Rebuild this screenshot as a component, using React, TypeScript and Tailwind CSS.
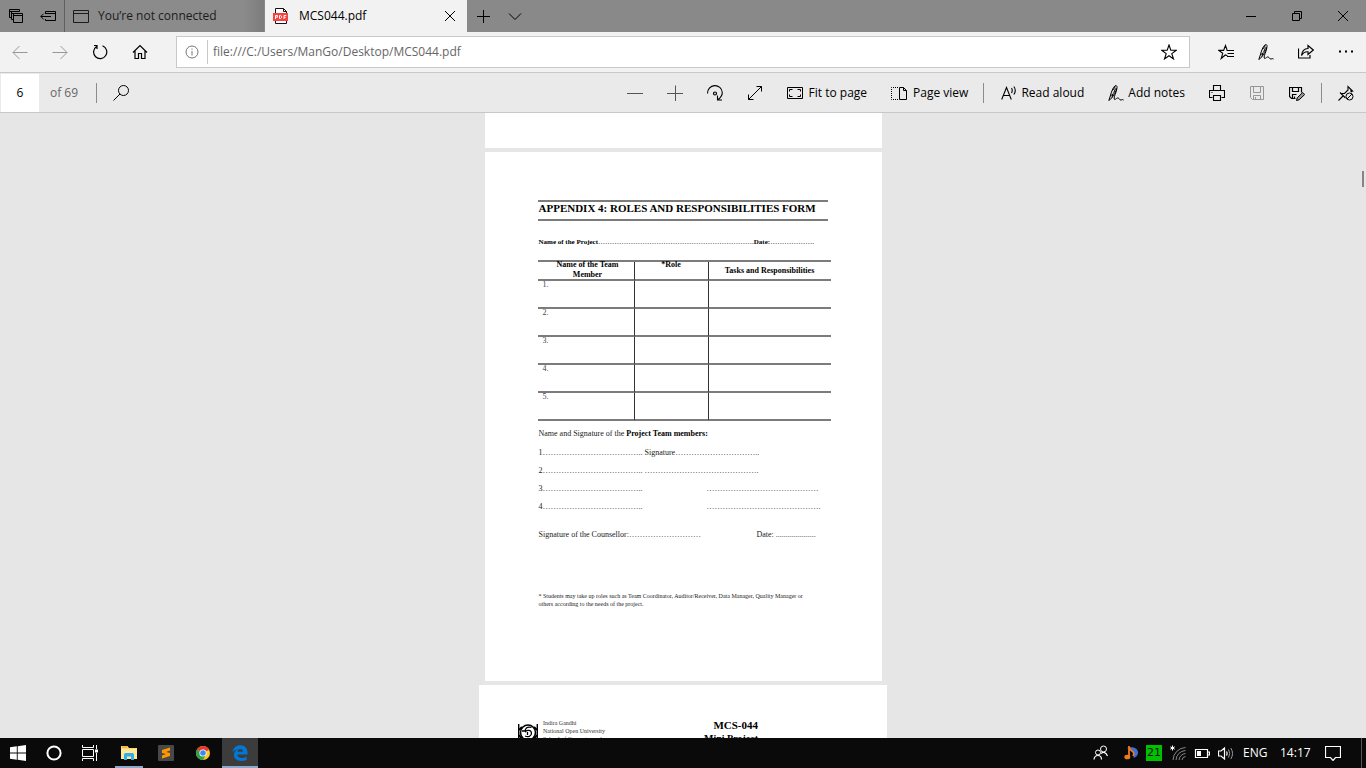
import React from 'react';
import type { ReactNode } from 'react';

const dots = (n: number, tail = 0) => '…'.repeat(n) + '.'.repeat(tail);

function Icon({ children, size = 16, className = '' }: { children: ReactNode; size?: number; className?: string }) {
  return (
    <svg
      width={size}
      height={size}
      viewBox={`0 0 ${size} ${size}`}
      fill="none"
      stroke="currentColor"
      strokeWidth="1"
      className={'shrink-0 ' + className}
      aria-hidden="true"
    >
      {children}
    </svg>
  );
}

function IconButton({ label, children, className = 'w-10' }: { label: string; children: ReactNode; className?: string }) {
  return (
    <button type="button" aria-label={label} className={'flex h-full shrink-0 items-center justify-center ' + className}>
      {children}
    </button>
  );
}

const PenIcon = () => (
  <Icon>
    <path d="M.8 15.500L2.300 11C3.300 7 4.800 3 6.800 1C7.800 0 9.300.6 9 2.400C8.500 6 5.500 11 2.600 14.200L.8 15.500M2.300 11L4.800 9L4 12.500M4.500 5.500L7.500 1.500M5.500 8.500L7.500 3.500" />
    <path d="M8.900 3.500C8.600 7 5.600 11.500 6.200 14C6.900 15.700 8.500 12.700 10 12.900C11.400 13.200 11.400 15.300 13 15C14.200 14.800 14.800 14.200 15.600 15" />
  </Icon>
);

const StarPath = 'M8 1l1.800 5.300h5.400l-4.400 3.300l1.700 5.300L8 11.700l-4.500 3.200l1.700-5.300L.8 6.300h5.400z';

function TabBar() {
  return (
    <div className="flex h-8 shrink-0 items-stretch bg-[#898989] text-black">
      <IconButton label="Tabs you've set aside" className="w-8">
        <Icon>
          <path d="M3.500 9.500h-2v-8h10v2M1.500 3.500h10M3.500 3.500v8M3.500 11.500h2M3.500 5.500h10M5.500 5.500h9v9h-9zM5.500 7.500h9" />
        </Icon>
      </IconButton>
      <IconButton label="Set these tabs aside" className="w-8">
        <Icon>
          <path d="M5.500 6V3.500h10v9h-10V11M5.500 5.500h10M11 8.500H.8M3.500 5.800L.8 8.500l2.700 2.700" />
        </Icon>
      </IconButton>
      <div className="flex w-[200px] items-center gap-[9px] border-l border-[#5f5f5f] bg-linear-to-r from-[#8b8b8b] from-90% to-[#7c7c7c] pl-2 text-[#1c1c1c]">
        <Icon>
          <path d="M.5 2.500h15v12H.5zM.5 5.500h15" />
        </Icon>
        <span>You’re not connected</span>
      </div>
      <div className="ml-px flex w-[202px] items-center bg-[#f2f2f2] pl-2">
        <svg width="16" height="16" viewBox="0 0 16 16" className="shrink-0" aria-hidden="true">
          <path d="M2.500 15.500V.5h8l3 3v12z" fill="#fff" stroke="#111" />
          <path d="M10.500.5v3h3" fill="none" stroke="#111" />
          <rect x="0" y="5" width="15" height="8" fill="#f9423f" />
          <path d="M2.500 11V7.500h2v1.700h-2M6.500 7.500v3h1.200l.8-.8v-1.400l-.8-.8zM11 11V7.500h2.200M11 9.300h1.800" fill="none" stroke="#fff" />
        </svg>
        <span className="ml-[10px] flex-1">MCS044.pdf</span>
        <IconButton label="Close tab" className="w-[34px]">
          <Icon>
            <path d="M3 3l10 10M13 3L3 13" />
          </Icon>
        </IconButton>
      </div>
      <IconButton label="New tab" className="w-8">
        <Icon>
          <path d="M8.500 2v13M2 8.500h13" />
        </Icon>
      </IconButton>
      <IconButton label="Show tab previews" className="w-8">
        <Icon>
          <path d="M2 5.500l6 6l6-6" />
        </Icon>
      </IconButton>
      <div className="flex-1" />
      <IconButton label="Minimize" className="w-[46px]">
        <Icon>
          <path d="M3 8.500h10" />
        </Icon>
      </IconButton>
      <IconButton label="Restore" className="w-[46px]">
        <Icon>
          <path d="M3.500 5.500h7v7h-7zM5.500 5.500v-2h7v7h-2" />
        </Icon>
      </IconButton>
      <IconButton label="Close" className="w-[46px]">
        <Icon>
          <path d="M3 3l10 10M13 3L3 13" />
        </Icon>
      </IconButton>
    </div>
  );
}

function NavBar() {
  return (
    <div className="flex h-10 shrink-0 items-center bg-[#f2f2f2] text-black">
      <IconButton label="Back">
        <Icon className="text-[#999]">
          <path d="M15.500 8.500H1M7.500 2L1 8.500L7.500 15" />
        </Icon>
      </IconButton>
      <IconButton label="Forward">
        <Icon className="text-[#999]">
          <path d="M.5 8.500H15M8.500 2L15 8.500L8.500 15" />
        </Icon>
      </IconButton>
      <IconButton label="Refresh">
        <Icon>
          <path d="M10.500 1.800A6.600 6.600 0 1 1 4.500 2.500M2 1.500h3v3.500" strokeWidth="1.200" />
        </Icon>
      </IconButton>
      <IconButton label="Home">
        <Icon>
          <path d="M1 8.500L8 1.600l7 6.900M3 7v7.500h3.500v-5h3v5H13V7" strokeWidth="1.200" />
        </Icon>
      </IconButton>
      <div className="mx-4 flex h-8 flex-1 items-center border border-[#c9c9c9] bg-white">
        <Icon className="ml-[7px] text-[#777]">
          <circle cx="8" cy="8" r="6" />
          <path d="M8 7v4.500M8 4.500v1.200" />
        </Icon>
        <span className="ml-[7px] h-6 w-px bg-[#c9c9c9]" />
        <input
          aria-label="Address"
          defaultValue="file:///C:/Users/ManGo/Desktop/MCS044.pdf"
          className="ml-[5px] min-w-0 flex-1 bg-transparent text-[#666] outline-none"
        />
        <IconButton label="Add to favorites">
          <Icon>
            <path d={StarPath} strokeWidth="1.100" />
          </Icon>
        </IconButton>
      </div>
      <IconButton label="Favorites">
        <Icon>
          <path d="M9.500 11.800L7.300 11L3.200 14.500l1.500-5.200L.9 6.400h4.700L7.500 1.500l1.700 4.900M8.500 6.500H16M9.500 9.500H16M9 12.500h7" strokeWidth="1.100" />
        </Icon>
      </IconButton>
      <IconButton label="Add notes to page">
        <PenIcon />
      </IconButton>
      <IconButton label="Share">
        <Icon>
          <path d="M.5 4.500v9.500h11.500v-3M3.500 11.500C4 7 6.500 4.600 10 4.500V1.500L15.300 6L10 10.500V7.800C7 7.500 5 9 3.500 11.500z" strokeWidth="1.200" />
        </Icon>
      </IconButton>
      <IconButton label="Settings and more">
        <Icon>
          <path d="M1 7.500h2M7 7.500h2M13 7.500h2" strokeWidth="2" />
        </Icon>
      </IconButton>
    </div>
  );
}

function Divider({ className }: { className: string }) {
  return <span className={'h-5 w-px shrink-0 bg-[#8c8c8c] ' + className} />;
}

function PdfToolbar() {
  return (
    <div className="flex h-[41px] shrink-0 items-center border-y border-[#c8c8c8] bg-[#eaeaea] text-black">
      <input aria-label="Page number" defaultValue="6" className="ml-px h-[38px] w-[38px] bg-white text-center outline-none" />
      <span className="ml-[11px] text-[#666]">of 69</span>
      <Divider className="ml-[18px]" />
      <IconButton label="Find" className="ml-1 w-10">
        <Icon>
          <circle cx="10.500" cy="5.500" r="5" />
          <path d="M7 9L.5 15.500" />
        </Icon>
      </IconButton>
      <div className="flex-1" />
      <IconButton label="Zoom out">
        <Icon>
          <path d="M0 8.500h16" stroke="#555" />
        </Icon>
      </IconButton>
      <IconButton label="Zoom in">
        <Icon>
          <path d="M0 8.500h16M8.500 .5v16" stroke="#555" />
        </Icon>
      </IconButton>
      <IconButton label="Rotate">
        <Icon>
          <path d="M.6 8.500A7.200 7.200 0 0 1 15.300 7.500Q15.300 11.500 10.800 14.800M10.500 10.500v4.500h4.500" strokeWidth="1.100" />
          <circle cx="8" cy="8.500" r="1.500" strokeWidth="1.200" />
        </Icon>
      </IconButton>
      <IconButton label="Full screen">
        <Icon>
          <path d="M1.500 14.500l13-13M9.500 1.500h5v5M1.500 9.500v5h5" />
        </Icon>
      </IconButton>
      <button type="button" className="flex h-full items-center gap-1.5 px-3">
        <Icon>
          <path d="M.5 2.500h15v11H.5zM2.500 6.500v-2h3M10.500 4.500h3v2M13.500 9.500v2h-3M5.500 11.500h-3v-2" />
        </Icon>
        Fit to page
      </button>
      <button type="button" className="flex h-full items-center gap-1.5 px-3">
        <Icon>
          <path d="M8.500 2.500h4l3 3v9h-7zM12.500 2.500v3h3" />
          <path d="M7 2.500H.5v12H7" strokeDasharray="1 1" />
        </Icon>
        Page view
      </button>
      <Divider className="mr-[5px] ml-[3px]" />
      <button type="button" className="flex h-full items-center gap-1 px-3">
        <Icon>
          <path d="M.7 14.500L5.500 2.500l4.800 12M2.500 10.500h6M10.500 3q1.500 2.500 0 5M12.800 1.500q3 4 0 8" strokeWidth="1.100" />
        </Icon>
        Read aloud
      </button>
      <button type="button" className="flex h-full items-center gap-1 px-3">
        <PenIcon />
        Add notes
      </button>
      <IconButton label="Print">
        <Icon>
          <path d="M3.500 12.500h-3v-7h15v7h-3M4.500 5.500v-5h7v5M4.500 10.500h7v5h-7zM2.500 7.500h1" strokeWidth="1.100" />
        </Icon>
      </IconButton>
      <IconButton label="Save">
        <Icon className="text-[#969696]">
          <path d="M1.500 1.500h13v13h-11l-2-2zM4.500 1.500v6h7v-6M4.500 14.500v-4h7v4M6.500 12v2" />
        </Icon>
      </IconButton>
      <IconButton label="Save as">
        <Icon>
          <path d="M6.500 13.500h-4l-2-2v-9h12v5M3.500 2.500v4h6v-4M3.500 13.500v-4h4M5.500 11.500v2" strokeWidth="1.200" />
          <path d="M7.500 15.500l.7-2.700l5.500-5.300l2 2l-5.500 5.300z" fill="#999" />
        </Icon>
      </IconButton>
      <Divider className="mx-1" />
      <IconButton label="Unpin toolbar">
        <Icon>
          <path d="M.5 15.500L5 11M2 7.500L7.500 13M3 8.500h3.500L10 5V1.500L14.500 6H12M14.500 6L13 7" strokeWidth="1.100" />
          <circle cx="11.500" cy="11.500" r="3.500" />
          <path d="M9 14l5-5" />
        </Icon>
      </IconButton>
    </div>
  );
}

function RolesTable() {
  return (
    <table className="-ml-px w-[293px] table-fixed border-separate border-spacing-0 border-t-2 border-[#7c7c7c] leading-[10px]">
      <colgroup>
        <col className="w-[97px]" />
        <col className="w-[74px]" />
        <col />
      </colgroup>
      <thead>
        <tr>
          <th className="h-[19px] border-r border-b-2 border-r-[#333] border-b-[#7c7c7c] p-0 align-top">
            <div className="-mt-0.5 -mb-px pr-3 pl-4">Name of the Team Member</div>
          </th>
          <th className="border-r border-b-2 border-r-[#333] border-b-[#7c7c7c] p-0 align-top">
            <div className="-mt-0.5">*Role</div>
          </th>
          <th className="border-b-2 border-b-[#7c7c7c] p-0 align-middle">Tasks and Responsibilities</th>
        </tr>
      </thead>
      <tbody>
        {[1, 2, 3, 4, 5].map((n) => (
          <tr key={n}>
            <td className="h-7 border-r border-b-2 border-r-[#333] border-b-[#7c7c7c] p-0 pl-[5px] align-top leading-2 text-[#444]">{n}.</td>
            <td className="border-r border-b-2 border-r-[#333] border-b-[#7c7c7c] p-0" />
            <td className="border-b-2 border-b-[#7c7c7c] p-0" />
          </tr>
        ))}
      </tbody>
    </table>
  );
}

function FormPage() {
  return (
    <article className="h-[529px] w-[397px] shrink-0 bg-white pt-12 pl-[54px] text-[8px] whitespace-nowrap">
      <h1 className="-ml-px flex h-[21px] w-[290px] items-center border-y-2 border-[#7c7c7c] pb-1 pl-px text-[11px] leading-[13px] font-bold">
        APPENDIX 4: ROLES AND RESPONSIBILITIES FORM
      </h1>
      <p className="mt-4 mb-[13px] text-[7px] leading-[10px] font-bold">
        Name of the Project<span className="font-normal">{dots(22, 1)}</span>Date:<span className="font-normal">{dots(6, 1)}</span>
      </p>
      <div className="whitespace-normal">
        <RolesTable />
      </div>
      <div className="mt-1 leading-[18px] text-[#222]">
        <p className="mb-px">
          Name and Signature of the <b className="text-black">Project Team members:</b>
        </p>
        <p>1{dots(12, 2)} Signature{dots(10, 2)}</p>
        <p>2{dots(12, 2)} {dots(14, 1)}</p>
        <p className="flex">
          <span className="w-[168px]">3{dots(12, 2)}</span>
          <span>{dots(14)}</span>
        </p>
        <p className="flex">
          <span className="w-[168px]">4{dots(12, 2)}</span>
          <span>{dots(14, 1)}</span>
        </p>
        <p className="mt-[10px] flex">
          <span className="w-[218px]">Signature of the Counsellor:{dots(9)}</span>
          <span>Date: {dots(0, 20)}</span>
        </p>
      </div>
      <p className="mt-12 text-[6px] leading-2 text-[#222]">
        * Students may take up roles such as Team Coordinator, Auditor/Receiver, Data Manager, Quality Manager or
        <br />
        others according to the needs of the project.
      </p>
    </article>
  );
}

function CoverPage() {
  return (
    <article className="flex h-[540px] w-[408px] shrink-0 items-start bg-white pt-[34px] pl-[39px]">
      <svg width="20" height="20" viewBox="0 0 20 20" fill="none" stroke="#000" className="mt-1 shrink-0" aria-hidden="true">
        <path d="M.7 1v15M19.300 1v15" strokeWidth="1.400" />
        <path d="M1 7l3-3M1 12l3 4M19 7l-3-3M19 12l-3 4" strokeWidth="2" />
        <circle cx="10" cy="9.500" r="7.500" strokeWidth="1.600" />
        <path d="M13.500 4.500C9 3 6.500 6 7.500 8.500C9 7 13 6.500 13.500 10C13.500 13.500 10 14.500 7 13M4 8h4M9.500 9v3" strokeWidth="1.300" />
      </svg>
      <p className="ml-[5px] w-[100px] text-[6px] leading-2 text-[#333]">
        Indira Gandhi
        <br />
        National Open University
        <br />
        School of Computer and
      </p>
      <p className="ml-[42px] w-[73px] text-right text-[11px] leading-[13px] font-bold">
        MCS-044
        <br />
        <span className="text-[10px]">Mini Project</span>
      </p>
    </article>
  );
}

function TaskButton({ label, active = false, open = false, children }: { label: string; active?: boolean; open?: boolean; children: ReactNode }) {
  return (
    <button
      type="button"
      aria-label={label}
      className={'relative flex h-full w-9 items-center justify-center ' + (active ? 'bg-[#3c3c3c]' : '')}
    >
      {children}
      {(open || active) && <span className={'absolute bottom-0 h-0.5 bg-[#8aa9cf] ' + (active ? 'inset-x-0' : 'inset-x-1')} />}
    </button>
  );
}

function Taskbar() {
  return (
    <footer className="flex h-[30px] shrink-0 items-center bg-[#0a0a0a] text-white">
      <TaskButton label="Start">
        <svg width="16" height="16" viewBox="0 0 16 16" fill="#fff">
          <path d="M0 2.200L6.800 1.300V7.500H0zM7.700 1.200L16 0V7.500H7.700zM0 8.400H6.800V14.700L0 13.800zM7.700 8.400H16V16L7.700 14.800z" />
        </svg>
      </TaskButton>
      <TaskButton label="Search">
        <svg width="18" height="18" viewBox="0 0 18 18" fill="none" stroke="#fff">
          <circle cx="9" cy="9" r="6.600" strokeWidth="2" />
        </svg>
      </TaskButton>
      <TaskButton label="Task View">
        <Icon>
          <path d="M.5 4.500h11v7H.5zM.5 0v2.500h11V0M.5 16v-2.500h11V16M14.500 0v4M14.500 8v8" />
          <path d="M14.500 4.500v3" strokeWidth="3" />
        </Icon>
      </TaskButton>
      <div className="ml-[3px] flex h-full gap-px">
        <TaskButton label="File Explorer" open>
          <svg width="16" height="16" viewBox="0 0 16 16">
            <path d="M0 1h6.500l1.500 2H16v11H0z" fill="#ffd76b" />
            <path d="M0 4h16v10H0z" fill="#ffe89b" />
            <path d="M1 1.500h5v1H1z" fill="#e79a24" />
            <path d="M3 15V9.500Q3 8 4.500 8h7Q13 8 13 9.500V15h-3v-3.500H6V15z" fill="#35aee8" />
          </svg>
        </TaskButton>
        <TaskButton label="Sublime Text">
          <svg width="16" height="16" viewBox="0 0 16 16">
            <rect width="16" height="16" rx="1" fill="#484848" />
            <path d="M4 5l8-2.500v3L8 7l4 1v3L4 13.500v-3L8 9L4 8z" fill="#ff9800" />
          </svg>
        </TaskButton>
        <TaskButton label="Google Chrome">
          <svg width="16" height="16" viewBox="0 0 16 16">
            <circle cx="8" cy="8" r="7" fill="#fbc928" />
            <path d="M8 8L1.940 4.500A7 7 0 0 1 14.060 4.500z" fill="#e33b2e" />
            <path d="M1.940 4.500A7 7 0 0 0 8 15L11 9.700L8 8z" fill="#2ba24c" />
            <path d="M8 4.500h6.060L8 8z" fill="#e33b2e" />
            <circle cx="8" cy="8" r="3.600" fill="#fff" />
            <circle cx="8" cy="8" r="2.800" fill="#4285f4" />
          </svg>
        </TaskButton>
        <TaskButton label="Microsoft Edge" active>
          <svg width="16" height="16" viewBox="0 0 16 16" fill="#0078d7">
            <path d="M.5 7.200C1.200 2.800 4.300.3 8.300.3C12.800.3 15.500 3.500 15.500 7.800V9.500H5.300C5.400 12 7.500 13 9.800 13C11.600 13 13.200 12.500 14.500 11.700V15C13 15.700 11.200 16 9.300 16C5 16 2 13.700 2 9.800C2 7.300 3.400 5.300 5.500 4.200C3.500 4.500 1.800 5.500.5 7.200zM5.400 6.700H11C11 4.800 10 3.900 8.400 3.900C6.800 3.900 5.700 5 5.400 6.700z" />
          </svg>
        </TaskButton>
      </div>
      <div className="flex-1" />
      <div className="flex h-full items-center">
        <Icon>
          <circle cx="10.500" cy="4" r="3" />
          <circle cx="5" cy="7.500" r="2.500" />
          <path d="M1 14.500Q1.500 10.500 5 10.500T8.500 14.500M8 8.500Q12 5.500 14.500 11" strokeWidth="1.200" />
        </Icon>
        <svg width="16" height="16" viewBox="0 0 16 16" className="ml-[14px]" aria-hidden="true">
          <path d="M4 3C11 1 15.500 4 15 8.500Q14 12 10.500 13Q12.500 7 7 5z" fill="#3c6fd8" />
          <path d="M6 1v10M6 2Q7 5 9.500 6.500T10 11" stroke="#f0791a" strokeWidth="1.800" fill="none" />
          <ellipse cx="4.300" cy="12" rx="3" ry="2.300" fill="#f0791a" />
        </svg>
        <span className="ml-[7px] flex size-4 items-center justify-center bg-[#00c000] font-['DejaVu_Sans',sans-serif] text-[11px] text-[#111]">21</span>
        <Icon className="ml-2">
          <path d="M3 16A13 13 0 0 1 15.500 3.500M6 16A10 10 0 0 1 15.500 6.500M9 16A7 7 0 0 1 15.500 9.500M12 16A4 4 0 0 1 15.500 12.500" stroke="#888" transform="translate(0 -1)" />
          <path d="M2.500.5v5M.3 1.800l4.400 2.400M.3 4.200l4.400-2.400" />
        </Icon>
        <Icon className="ml-2">
          <path d="M1.500 4.500h12v8h-12zM13.500 7v3h2V7z" strokeWidth="1.200" />
          <path d="M3 6h4v5H3z" fill="#fff" stroke="none" />
        </Icon>
        <Icon className="ml-2">
          <path d="M.5 6v5h2.500l3.500 3V3L3 6zM8.500 6.500q1.200 2 0 4" strokeWidth="1.200" />
          <path d="M10.500 4.500q2.500 4 0 8M12.800 3q3.500 5.500 0 11" stroke="#999" />
        </Icon>
        <span className="ml-[9px] w-[37px]">ENG</span>
        <span className="w-[45px]">14:17</span>
        <Icon className="mr-5">
          <path d="M.5 1.500h15v11h-5L8 15.500L5.500 12.500h-5z" strokeWidth="1.200" />
        </Icon>
        <span className="mr-1 h-full w-px bg-[#555]" />
      </div>
    </footer>
  );
}

export default function App() {
  return (
    <div className="flex h-screen flex-col overflow-hidden bg-[#e6e6e6] font-['Open_Sans','Noto_Sans',sans-serif] text-xs leading-4">
      <TabBar />
      <NavBar />
      <PdfToolbar />
      <main className="relative min-h-0 flex-1 overflow-hidden font-['Liberation_Serif',serif] text-black">
        <div className="flex flex-col items-center gap-1">
          <div className="h-[35px] w-[397px] shrink-0 bg-white" />
          <FormPage />
          <CoverPage />
        </div>
        <span className="absolute top-[58px] right-0.5 h-4 w-0.5 bg-[#858585]" />
      </main>
      <Taskbar />
    </div>
  );
}
